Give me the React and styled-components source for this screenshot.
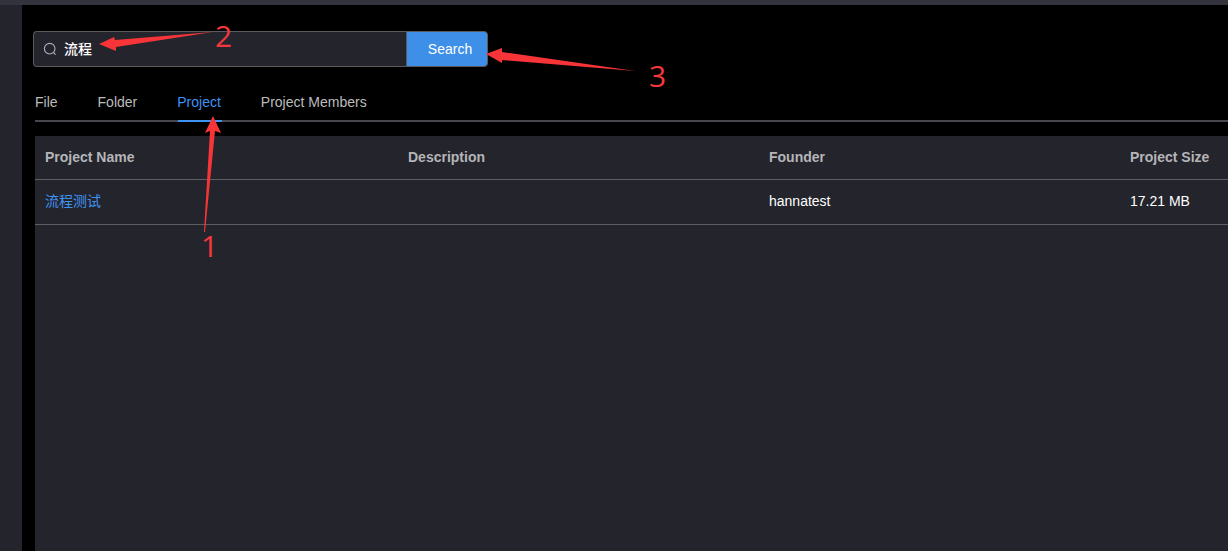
import React from "react";
import styled, { createGlobalStyle } from "styled-components";

const Global = createGlobalStyle`
  html, body { margin: 0; padding: 0; background: #000; overflow: hidden; }
  * { box-sizing: border-box; }
`;
const Page = styled.div`
  position: relative; width: 1228px; height: 551px; overflow: hidden;
  display: flex; flex-direction: column; background: #000;
  font-family: "Liberation Sans", "Noto Sans CJK SC", sans-serif; font-size: 14px;
`;
const TopBar = styled.div`height: 5px; flex: none; background: #33333d;`;
const Body = styled.div`flex: 1; display: flex; min-height: 0;`;
const Rail = styled.div`width: 22px; flex: none; background: #24242c;`;
const Main = styled.main`flex: 1; min-width: 0; padding: 26px 0 0 11px; background: #000;`;
const SearchRow = styled.div`display: flex; width: 455px; height: 36px;`;
const SearchField = styled.div`
  flex: 1; display: flex; align-items: center; gap: 7px; padding: 0 0 3px 10px;
  background: #24242c; border: 1px solid #5a5a5f; border-right: none;
  border-radius: 4px 0 0 4px; color: #fff; font-size: 14px; font-weight: 500;
  svg { color: #a9b2bb; flex: none; margin: 3px 0 0 -1px; }
`;
const SearchButton = styled.button`
  width: 82px; border: 1px solid #5a5a5f; border-radius: 0 4px 4px 0;
  background: #3d8fe8; color: #fff; font: inherit; padding: 0 0 0 6px;
`;
const Tabs = styled.div`
  display: flex; gap: 40px; margin: 19px 0 0 2px; height: 36px;
  border-bottom: 2px solid #47474d;
`;
const Tab = styled.div`
  position: relative; height: 36px; line-height: 32px;
  color: ${p => (p.$active ? "#3f93f3" : "#bcbcbc")};
  &::after {
    content: ""; position: absolute; left: 1px; right: -1px; bottom: 0; height: 2px;
    background: ${p => (p.$active ? "#3f93f3" : "transparent")};
  }
`;
const Table = styled.div`margin: 14px 0 0 2px; height: 420px; background: #24242c;`;
const Row = styled.div`
  display: grid; grid-template-columns: 363px 361px 361px 1fr; align-items: center;
  height: ${p => p.$h}px; padding: 0 0 2px 10px; border-bottom: 1px solid #5e5e60;
`;
const HeadCell = styled.div`color: #b5b5b8; font-weight: 700;`;
const Cell = styled.div`color: #fff;`;
const LinkCell = styled.a`color: #3f93f3; font-size: 14px; line-height: 16px;`;
const Overlay = styled.svg`position: absolute; inset: 0; pointer-events: none;`;
const Mark = styled.span`
  position: absolute; left: ${p => p.$x}px; top: ${p => p.$y}px;
  color: #f5383c; font: 400 30px/36px "Open Sans", sans-serif;
`;

export default function App() {
  return (
    <Page>
      <Global />
      <TopBar />
      <Body>
        <Rail />
        <Main>
          <SearchRow>
            <SearchField>
              <svg width="14" height="14" viewBox="0 0 14 14" fill="none" stroke="currentColor" strokeWidth="1.1">
                <circle cx="6.7" cy="6.7" r="5.3" />
                <path d="M10.6 10.6 12.6 12.6" />
              </svg>
              流程
            </SearchField>
            <SearchButton>Search</SearchButton>
          </SearchRow>
          <Tabs>
            <Tab>File</Tab>
            <Tab>Folder</Tab>
            <Tab $active>Project</Tab>
            <Tab>Project Members</Tab>
          </Tabs>
          <Table>
            <Row $h={44}>
              <HeadCell>Project Name</HeadCell>
              <HeadCell>Description</HeadCell>
              <HeadCell>Founder</HeadCell>
              <HeadCell>Project Size</HeadCell>
            </Row>
            <Row $h={45}>
              <LinkCell>流程测试</LinkCell>
              <Cell />
              <Cell>hannatest</Cell>
              <Cell>17.21 MB</Cell>
            </Row>
          </Table>
        </Main>
      </Body>
      <Overlay width="1228" height="551" viewBox="0 0 1228 551">
        <g fill="#f73538">
          <polygon points="213,116 221,133 215,131 205,232 204,232 210,131 205,133" />
          <polygon points="99,44 114,37 115,40 213,32 116,47 116,51" />
          <polygon points="486,54 502,48 502,52 635,71 502,60 502,63" />
        </g>
      </Overlay>
      <Mark $x={201} $y={228}>1</Mark>
      <Mark $x={215} $y={18}>2</Mark>
      <Mark $x={649} $y={58}>3</Mark>
    </Page>
  );
}
